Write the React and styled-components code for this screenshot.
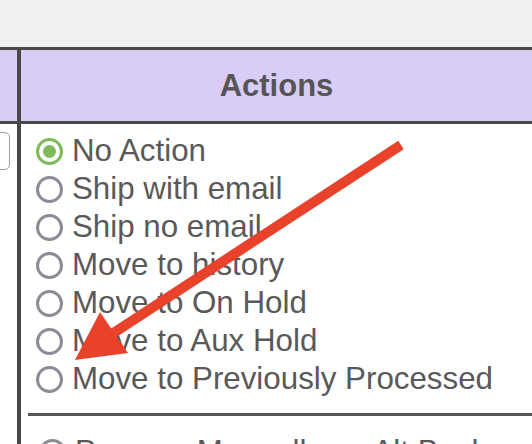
import React from 'react';
import styled, { createGlobalStyle } from 'styled-components';

const GlobalStyle = createGlobalStyle`
  html, body {
    margin: 0;
    padding: 0;
    background: #ffffff;
    font-family: "Liberation Sans", Arial, Helvetica, sans-serif;
  }
`;

const actions = [
  'No Action',
  'Ship with email',
  'Ship no email',
  'Move to history',
  'Move to On Hold',
  'Move to Aux Hold',
  'Move to Previously Processed',
];

const Page = styled.div`
  position: relative;
  width: 532px;
  height: 444px;
  overflow: hidden;
  background: #ffffff;
`;

const TopBar = styled.div`
  height: 47px;
  background: #f0f0f0;
`;

const Table = styled.div`
  display: grid;
  grid-template-columns: 17px 1fr;
  border-top: 3px solid #484848;
`;

const HeadCell = styled.div`
  height: 71px;
  background: #d9cdf8;
  border-bottom: 3px solid #484848;
  border-left: ${(p) => (p.$divider ? '4px solid #484848' : 'none')};
  display: flex;
  align-items: center;
  justify-content: center;
  font-size: 31px;
  font-weight: bold;
  color: #555555;
`;

const BodyCell = styled.div`
  border-left: ${(p) => (p.$divider ? '4px solid #484848' : 'none')};
  padding-top: 8px;
`;

const InputStub = styled.div`
  width: 16px;
  height: 36px;
  margin-left: -8px;
  border: 1.5px solid #a3a3ab;
  border-radius: 5px;
  background: #ffffff;
`;

const RadioList = styled.div`
  display: flex;
  flex-direction: column;
  padding-left: ${(p) => (p.$indent ? '18px' : '15px')};
`;

const Row = styled.label`
  display: flex;
  align-items: center;
  height: 38px;
  font-size: 31.3px;
  line-height: 38px;
  color: #595959;
  white-space: nowrap;
`;

const Radio = styled.span`
  position: relative;
  flex: none;
  box-sizing: border-box;
  width: 27px;
  height: 27px;
  margin-right: 9px;
  border-radius: 50%;
  border: 3px solid ${(p) => (p.$checked ? '#7dbb5a' : '#8c8c98')};
  background: #ffffff;

  &::after {
    content: '';
    display: ${(p) => (p.$checked ? 'block' : 'none')};
    position: absolute;
    left: 4px;
    top: 4px;
    width: 13px;
    height: 13px;
    border-radius: 50%;
    background: #7dbb5a;
  }
`;

const Separator = styled.hr`
  margin: 15px 0 17px 7px;
  border: none;
  border-top: 3px solid #555555;
  height: 0;
`;

const Arrow = styled.svg`
  position: absolute;
  left: 0;
  top: 0;
  pointer-events: none;
`;

export default function App() {
  return (
    <Page>
      <GlobalStyle />
      <TopBar />
      <Table>
        <HeadCell />
        <HeadCell $divider>Actions</HeadCell>
        <BodyCell>
          <InputStub />
        </BodyCell>
        <BodyCell $divider>
          <RadioList>
            {actions.map((a, i) => (
              <Row key={a}>
                <Radio $checked={i === 0} />
                {a}
              </Row>
            ))}
          </RadioList>
          <Separator />
          <RadioList $indent>
            <Row>
              <Radio />
              Process Manually on Alt Back
            </Row>
          </RadioList>
        </BodyCell>
      </Table>
      <Arrow width="532" height="444" viewBox="0 0 532 444">
        <line x1="401" y1="145" x2="112" y2="334" stroke="#e8432a" strokeWidth="10" />
        <polygon points="75,360 100,312 128,353" fill="#e8432a" />
      </Arrow>
    </Page>
  );
}
